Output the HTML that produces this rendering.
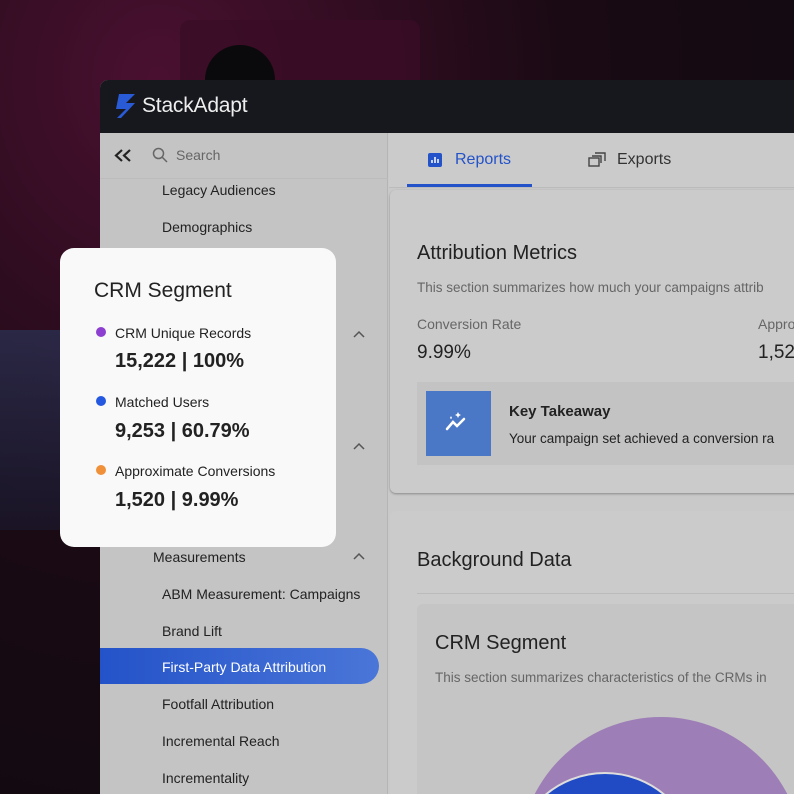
<!DOCTYPE html><html><head><style>
*{margin:0;padding:0;box-sizing:border-box}
html,body{width:794px;height:794px;overflow:hidden}
body{position:relative;font-family:"Liberation Sans",sans-serif;background:radial-gradient(ellipse at 20% 10%,#4a1030 0%,#1a0a14 45%,#0c0a0e 100%)}
.abs{position:absolute}
.win{left:100px;top:80px;width:694px;height:714px;background:#c9c9c9;border-radius:8px 0 0 0;overflow:hidden}
.hdr{left:0;top:0;width:694px;height:53px;background:#16181d}
.side{left:0;top:53px;width:288px;height:661px;background:#c4c4c4;border-right:1px solid #b5b5b5}
.t{position:absolute;color:#222;font-size:14px;white-space:nowrap}
.g{color:#666}
</style></head><body>
<div class="abs" style="left:180px;top:20px;width:240px;height:70px;background:#3a0c26;border-radius:10px;opacity:.8"></div>
<div class="abs" style="left:205px;top:45px;width:70px;height:70px;border-radius:50%;background:#0a0a0c"></div>
<div class="abs" style="left:0;top:330px;width:100px;height:200px;background:linear-gradient(#2a3a60,#1a1a30);opacity:.6"></div>
<div class="abs win">
 <div class="abs hdr">
  <svg class="abs" style="left:13px;top:12px" width="26" height="28" viewBox="0 0 26 28"><path d="M6 2h16l-9 9h9L8 26H4l9-9H3z" fill="#2a5bd7"/></svg>
  <div class="t" style="left:42px;top:14px;color:#eee;font-size:21px;letter-spacing:-.2px">StackAdapt</div>
 </div>
 <div class="abs side">
  <div class="abs" style="left:0;top:45px;width:288px;height:1px;background:#bcbcbc"></div>
  <svg class="abs" style="left:14px;top:16px" width="18" height="13"><path d="M8 1L2 6.5 8 12M16 1l-6 5.5 6 5.5" stroke="#222" stroke-width="2.2" fill="none"/></svg>
  <svg class="abs" style="left:52px;top:14px" width="16" height="16"><circle cx="6.5" cy="6.5" r="5" stroke="#666" stroke-width="1.5" fill="none"/><path d="M10 10l5 5" stroke="#666" stroke-width="1.5"/></svg>
  <div class="t g" style="left:76px;top:14px">Search</div>
  <div class="t" style="left:62px;top:49px">Legacy Audiences</div>
  <div class="t" style="left:62px;top:86px">Demographics</div>
  <svg class="abs" style="left:253px;top:197px" width="12" height="8"><path d="M1 7l5-5 5 5" stroke="#555" stroke-width="1.5" fill="none"/></svg>
  <svg class="abs" style="left:253px;top:309px" width="12" height="8"><path d="M1 7l5-5 5 5" stroke="#555" stroke-width="1.5" fill="none"/></svg>
  <div class="t" style="left:53px;top:416px">Measurements</div>
  <svg class="abs" style="left:253px;top:419px" width="12" height="8"><path d="M1 7l5-5 5 5" stroke="#555" stroke-width="1.5" fill="none"/></svg>
  <div class="t" style="left:62px;top:453px">ABM Measurement: Campaigns</div>
  <div class="t" style="left:62px;top:490px">Brand Lift</div>
  <div class="abs" style="left:0;top:515px;width:279px;height:36px;background:linear-gradient(90deg,#2453c9,#4a76d8);border-radius:0 18px 18px 0"></div>
  <div class="t" style="left:62px;top:526px;color:#fff">First-Party Data Attribution</div>
  <div class="t" style="left:62px;top:563px">Footfall Attribution</div>
  <div class="t" style="left:62px;top:600px">Incremental Reach</div>
  <div class="t" style="left:62px;top:637px">Incrementality</div>
 </div>
 <div class="abs" style="left:289px;top:53px;width:405px;height:55px;background:#cbcbcb;border-bottom:1px solid #bbb"></div>
 <svg class="abs" style="left:328px;top:73px" width="14" height="14"><rect width="14" height="14" rx="2" fill="#2453c9"/><path d="M4 10V7M7 10V4M10 10V6" stroke="#fff" stroke-width="1.5"/></svg>
 <div class="t" style="left:355px;top:71px;color:#2453c9;font-size:16px">Reports</div>
 <div class="abs" style="left:307px;top:104px;width:125px;height:3px;background:#2453c9"></div>
 <svg class="abs" style="left:488px;top:72px" width="18" height="16"><rect x="1" y="6" width="10" height="8" fill="none" stroke="#444" stroke-width="1.4"/><path d="M4 4h9v7M7 1h10v8" fill="none" stroke="#444" stroke-width="1.4"/></svg>
 <div class="t" style="left:517px;top:71px;color:#333;font-size:16px">Exports</div>
 <div class="abs" style="left:290px;top:110px;width:410px;height:303px;background:#cbcbcb;border-radius:6px;box-shadow:0 1px 2px #888"></div>
 <div class="t" style="left:317px;top:162px;font-size:20px">Attribution Metrics</div>
 <div class="t g" style="left:317px;top:200px;font-size:13.5px">This section summarizes how much your campaigns attrib</div>
 <div class="t g" style="left:317px;top:236px">Conversion Rate</div>
 <div class="t g" style="left:658px;top:236px">Appro</div>
 <div class="t" style="left:317px;top:262px;font-size:19px">9.99%</div>
 <div class="t" style="left:658px;top:262px;font-size:19px">1,52</div>
 <div class="abs" style="left:317px;top:302px;width:400px;height:83px;background:#c3c3c3"></div>
 <div class="abs" style="left:326px;top:311px;width:65px;height:65px;background:#4a78c6"></div>
 <svg class="abs" style="left:344px;top:330px" width="28" height="26"><path d="M3 19l6-7 4 4 7-7" stroke="#fff" stroke-width="2.5" fill="none" stroke-linecap="round"/><path d="M6 8l1-2 1 2-1 1zM14 2l1 2 2 1-2 1-1 2-1-2-2-1 2-1z" fill="#fff"/></svg>
 <div class="t" style="left:409px;top:323px;font-size:15px;font-weight:bold">Key Takeaway</div>
 <div class="t" style="left:409px;top:351px;font-size:13.5px">Your campaign set achieved a conversion ra</div>
 <div class="abs" style="left:290px;top:431px;width:410px;height:283px;background:#cbcbcb;border-radius:6px 6px 0 0"></div>
 <div class="t" style="left:317px;top:469px;font-size:20px">Background Data</div>
 <div class="abs" style="left:317px;top:513px;width:390px;height:1px;background:#bbb"></div>
 <div class="abs" style="left:317px;top:524px;width:390px;height:190px;background:#c5c5c5;border-radius:6px 6px 0 0"></div>
 <div class="t" style="left:335px;top:552px;font-size:20px">CRM Segment</div>
 <div class="t g" style="left:335px;top:590px;font-size:13.5px">This section summarizes characteristics of the CRMs in</div>
 <div class="abs" style="left:419px;top:637px;width:284px;height:284px;border-radius:50%;background:#9e7eb6"></div>
 <div class="abs" style="left:412px;top:692px;width:186px;height:186px;border-radius:50%;background:#214bc4;border:2px solid #ddd"></div>
</div>
<div class="abs" style="left:60px;top:248px;width:276px;height:299px;background:#f9f9f9;border-radius:14px">
 <div class="t" style="left:34px;top:31px;font-size:21px;color:#222">CRM Segment</div>
 <div class="abs" style="left:36px;top:79px;width:10px;height:10px;border-radius:50%;background:#8c3fd0"></div>
 <div class="t" style="left:55px;top:77px">CRM Unique Records</div>
 <div class="t" style="left:55px;top:102px;font-size:20px;font-weight:bold;color:#222">15,222 | 100%</div>
 <div class="abs" style="left:36px;top:148px;width:10px;height:10px;border-radius:50%;background:#2458e0"></div>
 <div class="t" style="left:55px;top:146px">Matched Users</div>
 <div class="t" style="left:55px;top:172px;font-size:20px;font-weight:bold;color:#222">9,253 | 60.79%</div>
 <div class="abs" style="left:36px;top:217px;width:10px;height:10px;border-radius:50%;background:#f0913a"></div>
 <div class="t" style="left:55px;top:215px">Approximate Conversions</div>
 <div class="t" style="left:55px;top:241px;font-size:20px;font-weight:bold;color:#222">1,520 | 9.99%</div>
</div>
</body></html>
